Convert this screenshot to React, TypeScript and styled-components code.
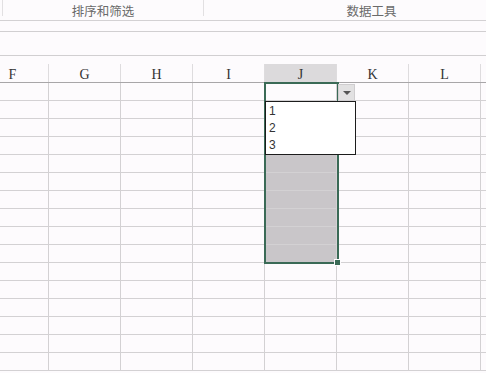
import React from 'react';
import styled, { createGlobalStyle } from 'styled-components';

const GlobalStyle = createGlobalStyle`
	html, body {
		margin: 0;
		padding: 0;
		background: #fdfbfd;
	}
	body {
		font-family: "Liberation Sans", "Noto Sans CJK SC", sans-serif;
	}
`;

const Page = styled.div`
	position: relative;
	width: 486px;
	height: 373px;
	overflow: hidden;
	background: #fdfbfd;
`;

const Ribbon = styled.div`
	display: flex;
	height: 21px;
	padding-left: 2px;
	border-bottom: 1px solid #d3d1d3;
	box-sizing: border-box;
`;

const GroupLabel = styled.div<{ $width: number }>`
	flex: none;
	width: ${p => p.$width}px;
	height: 16px;
	box-sizing: border-box;
	border-left: 1px solid #e2e0e2;
	display: flex;
	align-items: center;
	justify-content: center;
	padding-top: 4px;
	font-family: "Noto Sans CJK SC", sans-serif;
	font-size: 12.5px;
	color: #6a6a6a;
`;

const Band = styled.div<{ $height: number }>`
	height: ${p => p.$height}px;
	border-bottom: 1px solid #d1cfd1;
`;

const Gap = styled.div`
	height: 8px;
`;

const Sheet = styled.div`
	position: relative;
	margin-left: -23px;
`;

const Row = styled.div<{ $header?: boolean }>`
	display: flex;
	height: ${p => (p.$header ? 19 : 18)}px;
	box-sizing: border-box;
	border-bottom: 1px solid ${p => (p.$header ? '#a8a6a8' : '#d3d1d3')};
`;

const Cell = styled.div<{ $selected?: boolean; $filled?: boolean }>`
	width: 72px;
	flex: none;
	box-sizing: border-box;
	border-right: 1px solid #d3d1d3;
	background: ${p => (p.$filled ? '#c9c6c9' : 'transparent')};
`;

const HeaderCell = styled(Cell)`
	display: flex;
	align-items: center;
	justify-content: center;
	padding-top: 3px;
	font-family: "Liberation Serif", serif;
	font-size: 14px;
	color: #333;
	background: ${p => (p.$selected ? '#dcdadc' : 'transparent')};
	border-right-color: #dedcde;
`;

const Selection = styled.div`
	position: absolute;
	left: 287px;
	top: 18px;
	width: 75px;
	height: 182px;
	box-sizing: border-box;
	border: 2px solid #3a6a56;
	pointer-events: none;
`;

const FillHandle = styled.div`
	position: absolute;
	right: -4px;
	bottom: -4px;
	width: 5px;
	height: 5px;
	background: #3a6a56;
	border: 1px solid #fdfbfd;
`;

const DropButton = styled.div`
	position: absolute;
	left: 361px;
	top: 20px;
	width: 17px;
	height: 17px;
	box-sizing: border-box;
	background: #e2e1e2;
	border: 1px solid #cfcdcf;
	display: flex;
	align-items: center;
	justify-content: center;
`;

const Arrow = styled.div`
	width: 0;
	height: 0;
	border-left: 4px solid transparent;
	border-right: 4px solid transparent;
	border-top: 4px solid #555;
`;

const List = styled.div`
	position: absolute;
	left: 288px;
	top: 37px;
	width: 91px;
	height: 54px;
	box-sizing: border-box;
	border: 1px solid #1c1c1c;
	background: #fff;
	padding: 1px 0 0 3px;
`;

const Item = styled.div`
	height: 17px;
	line-height: 17px;
	font-family: "Liberation Sans", sans-serif;
	font-size: 12px;
	color: #333;
`;

const columns = ['F', 'G', 'H', 'I', 'J', 'K', 'L'];
const rowCount = 16;

export default function App() {
	return (
		<Page>
			<GlobalStyle />
			<Ribbon>
				<GroupLabel $width={201}>排序和筛选</GroupLabel>
				<GroupLabel $width={336}>数据工具</GroupLabel>
			</Ribbon>
			<Band $height={10} />
			<Band $height={23} />
			<Gap />
			<Sheet>
				<Row $header>
					{columns.map(c => (
						<HeaderCell key={c} $selected={c === 'J'}>
							{c}
						</HeaderCell>
					))}
				</Row>
				{Array.from({ length: rowCount }, (_, r) => (
					<Row key={r}>
						{columns.map(c => (
							<Cell key={c} $filled={c === 'J' && r > 0 && r < 10} />
						))}
					</Row>
				))}
				<Selection>
					<FillHandle />
				</Selection>
				<DropButton>
					<Arrow />
				</DropButton>
				<List>
					<Item>1</Item>
					<Item>2</Item>
					<Item>3</Item>
				</List>
			</Sheet>
		</Page>
	);
}
